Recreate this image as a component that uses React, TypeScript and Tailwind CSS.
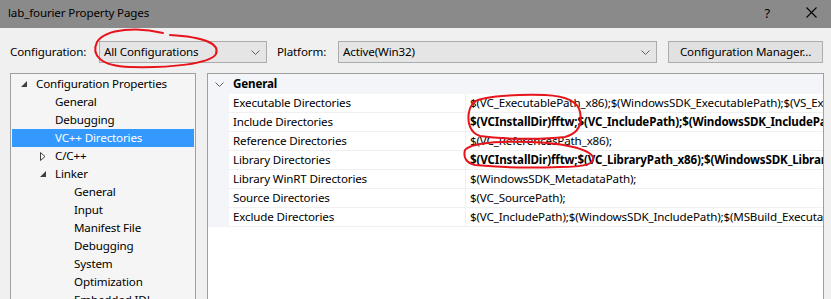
import React from "react";

type TreeItem = { label: string; level: number; expand?: "open" | "closed"; selected?: boolean };

const tree: TreeItem[] = [
  { label: "Configuration Properties", level: 0, expand: "open" },
  { label: "General", level: 1 },
  { label: "Debugging", level: 1 },
  { label: "VC++ Directories", level: 1, selected: true },
  { label: "C/C++", level: 1, expand: "closed" },
  { label: "Linker", level: 1, expand: "open" },
  { label: "General", level: 2 },
  { label: "Input", level: 2 },
  { label: "Manifest File", level: 2 },
  { label: "Debugging", level: 2 },
  { label: "System", level: 2 },
  { label: "Optimization", level: 2 },
  { label: "Embedded IDL", level: 2 },
];

const rows: { name: string; value: string; bold?: boolean }[] = [
  {
    name: "Executable Directories",
    value:
      "$(VC_ExecutablePath_x86);$(WindowsSDK_ExecutablePath);$(VS_ExecutablePath);$(MSBuild_ExecutablePath);$(SystemRoot)\\SysWow64;$(FxCopDir);$(PATH);",
  },
  {
    name: "Include Directories",
    value: "$(VCInstallDir)fftw;$(VC_IncludePath);$(WindowsSDK_IncludePath);",
    bold: true,
  },
  { name: "Reference Directories", value: "$(VC_ReferencesPath_x86);" },
  {
    name: "Library Directories",
    value: "$(VCInstallDir)fftw;$(VC_LibraryPath_x86);$(WindowsSDK_LibraryPath_x86);$(NETFXKitsDir)Lib\\um\\x86",
    bold: true,
  },
  { name: "Library WinRT Directories", value: "$(WindowsSDK_MetadataPath);" },
  { name: "Source Directories", value: "$(VC_SourcePath);" },
  {
    name: "Exclude Directories",
    value: "$(VC_IncludePath);$(WindowsSDK_IncludePath);$(MSBuild_ExecutablePath);$(VC_LibraryPath_x86)",
  },
];

function Chevron({ className = "" }: { className?: string }) {
  return (
    <svg width="9" height="5" viewBox="0 0 9 5" className={className}>
      <polyline points="0.5,0.5 4.5,4.5 8.5,0.5" fill="none" stroke="#606060" strokeWidth="1" />
    </svg>
  );
}

function Combo({ text, width }: { text: string; width: string }) {
  return (
    <div className={`${width} h-[22px] border border-[#acacac] bg-[#e5e5e5] flex items-center pl-[4px] pr-[6px]`}>
      <span className="flex-1">{text}</span>
      <Chevron />
    </div>
  );
}

function Expander({ kind }: { kind?: "open" | "closed" }) {
  if (kind === "open")
    return (
      <svg width="7" height="7" viewBox="0 0 7 7" className="ml-[1px]">
        <polygon points="6,0 6,6 0,6" fill="#404040" />
      </svg>
    );
  if (kind === "closed")
    return (
      <svg width="6" height="9" viewBox="0 0 6 9" className="ml-[1px]">
        <polygon points="0.5,0.5 5,4.5 0.5,8.5" fill="none" stroke="#404040" strokeWidth="1" />
      </svg>
    );
  return null;
}

export default function App() {
  return (
    <div className="relative w-[831px] h-[299px] overflow-hidden bg-[#f0f0f0] font-['Noto_Sans',sans-serif] text-[11.6px] tracking-[-0.15px] leading-none text-black">
      {/* Title bar */}
      <div className="h-[28px] bg-[#8a8a8a] flex items-center pl-[8px]">
        <span className="pb-[2px]">lab_fourier Property Pages</span>
        <div className="ml-auto flex items-center">
          <span className="mr-[36px] text-[13px] pb-[2px]">?</span>
          <svg width="11" height="11" viewBox="0 0 11 11" className="mr-[14px] mb-[4px]">
            <line x1="0.5" y1="0.5" x2="10.5" y2="10.5" stroke="#000" strokeWidth="1.1" />
            <line x1="10.5" y1="0.5" x2="0.5" y2="10.5" stroke="#000" strokeWidth="1.1" />
          </svg>
        </div>
      </div>

      {/* Configuration row */}
      <div className="flex items-center mt-[13px] pl-[10px]">
        <span className="w-[89px]">Configuration:</span>
        <Combo text="All Configurations" width="w-[168px]" />
        <span className="ml-[10px] w-[61px]">Platform:</span>
        <Combo text="Active(Win32)" width="w-[319px]" />
        <div className="ml-[11px] w-[155px] h-[22px] border border-[#adadad] bg-[#e1e1e1] flex items-center justify-center">
          Configuration Manager...
        </div>
      </div>

      {/* Panels */}
      <div className="flex mt-[10px] pl-[10px] gap-[11px]">
        {/* Tree */}
        <div className="w-[186px] h-[240px] border border-[#a0a0a0] bg-[#f5f5f5] pt-[1px] px-[1px] overflow-hidden">
          {tree.map((t, i) => (
            <div
              key={i}
              className={`h-[18px] flex items-center ${t.selected ? "bg-[#3399ff] text-white" : ""}`}
              style={{ paddingLeft: 8 + t.level * 19 }}
            >
              <div className="w-[16px] flex items-center">
                <Expander kind={t.expand} />
              </div>
              <span className="whitespace-nowrap">{t.label}</span>
            </div>
          ))}
        </div>

        {/* Property grid */}
        <div className="w-[617px] h-[240px] border border-[#a0a0a0] bg-white overflow-hidden">
          <div className="h-[20px] bg-[#f3f5f9] flex items-center">
            <div className="w-[21px] flex justify-center pl-[1px]">
              <Chevron />
            </div>
            <span className="pl-[4px] font-bold">General</span>
          </div>
          {rows.map((r, i) => (
            <div key={i} className="h-[19px] flex">
              <div className="w-[21px] bg-[#f3f5f9]" />
              <div className="flex-1 flex border-b border-[#f0f0f0] min-w-0">
                <div className="w-[236px] flex items-center pl-[4px] whitespace-nowrap">{r.name}</div>
                <div
                  className={`flex-1 min-w-0 flex items-center pl-[4px] border-l border-[#f0f0f0] whitespace-nowrap overflow-hidden ${
                    r.bold ? "font-bold" : ""
                  }`}
                >
                  {r.value}
                </div>
              </div>
            </div>
          ))}
        </div>
      </div>

      {/* Red hand-drawn annotations */}
      <svg
        className="absolute left-0 top-0 pointer-events-none"
        width="831"
        height="299"
        viewBox="0 0 831 299"
      >
        <g fill="none" stroke="#e8141b" strokeWidth="2" strokeLinecap="round" strokeLinejoin="round">
          <path d="M163,33 C140,27 106,28 97,42 C91,55 100,66 130,67 C170,68 210,64 216,54 C220,44 205,37 170,35" />
          <path d="M472,103 C480,96 520,94 545,95 C565,96 578,101 580,112 C582,122 580,133 565,137 C540,140 500,139 480,136 C470,133 467,122 469,112 C470,106 473,103 476,101" />
          <path d="M466,149 C475,142 500,141 530,142 C560,143 588,148 593,157 C595,164 585,167 560,167 C530,168 495,167 475,165 C466,163 463,157 465,150" />
        </g>
      </svg>
    </div>
  );
}
